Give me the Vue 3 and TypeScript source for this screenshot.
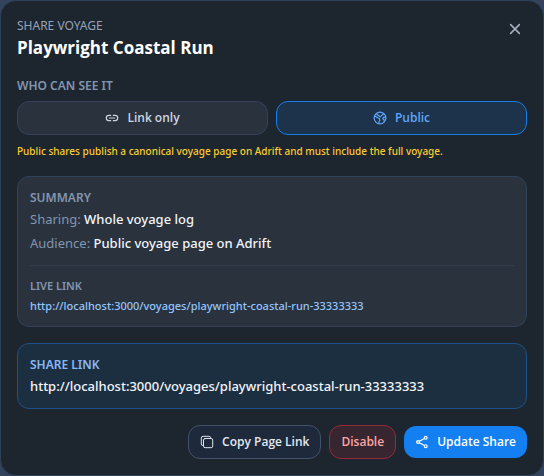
<script setup lang="ts">
import { ref } from 'vue'

type Audience = 'link' | 'public'

const audience = ref<Audience>('public')
const link = 'http://localhost:3000/voyages/playwright-coastal-run-33333333'
</script>

<template>
  <section class="dialog" role="dialog" aria-labelledby="share-title">
    <header class="head">
      <div>
        <p class="eyebrow">SHARE VOYAGE</p>
        <h1 id="share-title" class="title">Playwright Coastal Run</h1>
      </div>
      <button class="close" type="button" aria-label="Close">
        <svg class="bold" viewBox="0 0 512 512" width="18" height="18">
          <path d="M380 380L132 132M380 132L132 380" />
        </svg>
      </button>
    </header>

    <h2 class="label">WHO CAN SEE IT</h2>
    <div class="choices">
      <button
        type="button"
        class="btn choice"
        :class="{ active: audience === 'link' }"
        :aria-pressed="audience === 'link'"
        @click="audience = 'link'"
      >
        <svg class="bold" viewBox="0 0 512 512" width="14" height="14">
          <path d="M208 352h-64a96 96 0 010-192h64M304 160h64a96 96 0 010 192h-64M163 256h187" />
        </svg>
        Link only
      </button>
      <button
        type="button"
        class="btn choice"
        :class="{ active: audience === 'public' }"
        :aria-pressed="audience === 'public'"
        @click="audience = 'public'"
      >
        <svg class="bold" viewBox="0 0 512 512" width="14" height="14">
          <circle cx="256" cy="256" r="214" />
          <path d="M66 190c50 4 64 50 108 62 40 12 84 30 78 70-6 42-40 60-42 132M134 106c24 56 72 34 90 78 16 40 52 36 72-4 20-38 60-30 94-76M462 236c-40-16-76-12-94 12-22 30 0 58 30 64 24 6 14 30 2 54" />
        </svg>
        Public
      </button>
    </div>
    <p class="note">Public shares publish a canonical voyage page on Adrift and must include the full voyage.</p>

    <div class="card">
      <h2 class="label">SUMMARY</h2>
      <p class="row">Sharing: <span>Whole voyage log</span></p>
      <p class="row">Audience: <span>Public voyage page on Adrift</span></p>
      <div class="live">
        <h3 class="label small">LIVE LINK</h3>
        <a class="live-link" :href="link">{{ link }}</a>
      </div>
    </div>

    <div class="card share">
      <h2 class="label">SHARE LINK</h2>
      <p class="share-link">{{ link }}</p>
    </div>

    <footer class="actions">
      <button type="button" class="btn copy">
        <svg viewBox="0 0 512 512" width="14" height="14">
          <rect x="128" y="128" width="336" height="336" rx="57" />
          <path d="M383.5 128l.5-24a56 56 0 00-56-56H112a64 64 0 00-64 64v216a56 56 0 0056 56h24" />
        </svg>
        Copy Page Link
      </button>
      <button type="button" class="btn disable">Disable</button>
      <button type="button" class="btn update">
        <svg class="bold" viewBox="0 0 512 512" width="14" height="14">
          <circle cx="112" cy="256" r="52" />
          <circle cx="392" cy="104" r="52" />
          <circle cx="392" cy="408" r="52" />
          <path d="M158 281l188 102M346 129l-188 102" />
        </svg>
        Update Share
      </button>
    </footer>
  </section>
</template>

<style>
body {
  background: #32435b;
}
</style>

<style scoped>
.dialog {
  box-sizing: border-box;
  padding: 16px;
  border: 1px solid #2f4159;
  border-radius: 16px;
  background: #1d262f;
  color: #f1f5f9;
  font-family: "Noto Sans", "Open Sans", sans-serif;
}
p,
h1,
h2,
h3 {
  margin: 0;
}
svg {
  flex: none;
  fill: none;
  stroke: currentColor;
  stroke-width: 36;
  stroke-linecap: round;
  stroke-linejoin: round;
}
svg.bold {
  stroke-width: 44;
}
.head {
  display: flex;
  justify-content: space-between;
  align-items: flex-start;
}
.eyebrow {
  color: #94a3b8;
  font-size: 12px;
  line-height: 17px;
}
.title {
  color: #fff;
  font-family: "Open Sans", "Noto Sans", sans-serif;
  font-size: 17px;
  font-weight: 700;
  line-height: 28px;
}
.close {
  display: flex;
  padding: 3px;
  border: 0;
  background: none;
  color: #a5b1c2;
}
.label {
  color: #8495b0;
  font-size: 12px;
  font-weight: 600;
  line-height: 18px;
}
.head + .label {
  margin-top: 15px;
}
.label.small {
  font-size: 11px;
  line-height: 16px;
}
.choices {
  display: grid;
  grid-template-columns: 1fr 1fr;
  gap: 8px;
  margin-top: 6px;
}
.btn {
  display: flex;
  align-items: center;
  justify-content: center;
  gap: 8px;
  padding: 8px 11px;
  border: 1px solid;
  border-radius: 12px;
  font-family: "Open Sans", "Noto Sans", sans-serif;
  font-size: 12px;
  font-weight: 600;
  line-height: 16px;
  white-space: nowrap;
}
.choice {
  border-color: #33435b;
  background: #29323d;
  color: #cbd5e1;
}
.choice.active {
  border-color: #147feb;
  background: #1c334b;
  color: #60a5fa;
}
.note {
  margin-top: 8px;
  color: #facc2e;
  font-size: 10px;
  font-weight: 500;
  line-height: 17px;
}
.card {
  margin-top: 16px;
  padding: 12px;
  border: 1px solid #30435b;
  border-radius: 12px;
  background: #29323d;
}
.row {
  margin-top: 4px;
  color: #8495b0;
  font-size: 13px;
  line-height: 20px;
}
.label + .row,
.label + .share-link {
  margin-top: 2px;
}
.row span {
  color: #f1f5f9;
  font-weight: 500;
}
.live {
  margin-top: 12px;
  padding-top: 12px;
  border-top: 1px solid #2f3f4d;
}
.live-link {
  display: block;
  margin-top: 4px;
  color: #93c5fd;
  font-size: 11px;
  font-weight: 500;
  line-height: 16px;
  text-decoration: none;
}
.share {
  border-color: #1c528c;
  background: #1c2f41;
}
.share .label {
  color: #8ab8f5;
}
.share-link {
  font-size: 13px;
  font-weight: 500;
  line-height: 20px;
}
.actions {
  display: flex;
  align-items: center;
  justify-content: flex-end;
  gap: 8px;
  margin-top: 16px;
}
.copy {
  border-color: #42516a;
  background: #1e293b;
  color: #e2e8f0;
}
.disable {
  border-color: #98293a;
  background: #37252f;
  color: #fca5a5;
}
.update {
  border: 0;
  background: #147ff0;
  color: #fff;
}
</style>
